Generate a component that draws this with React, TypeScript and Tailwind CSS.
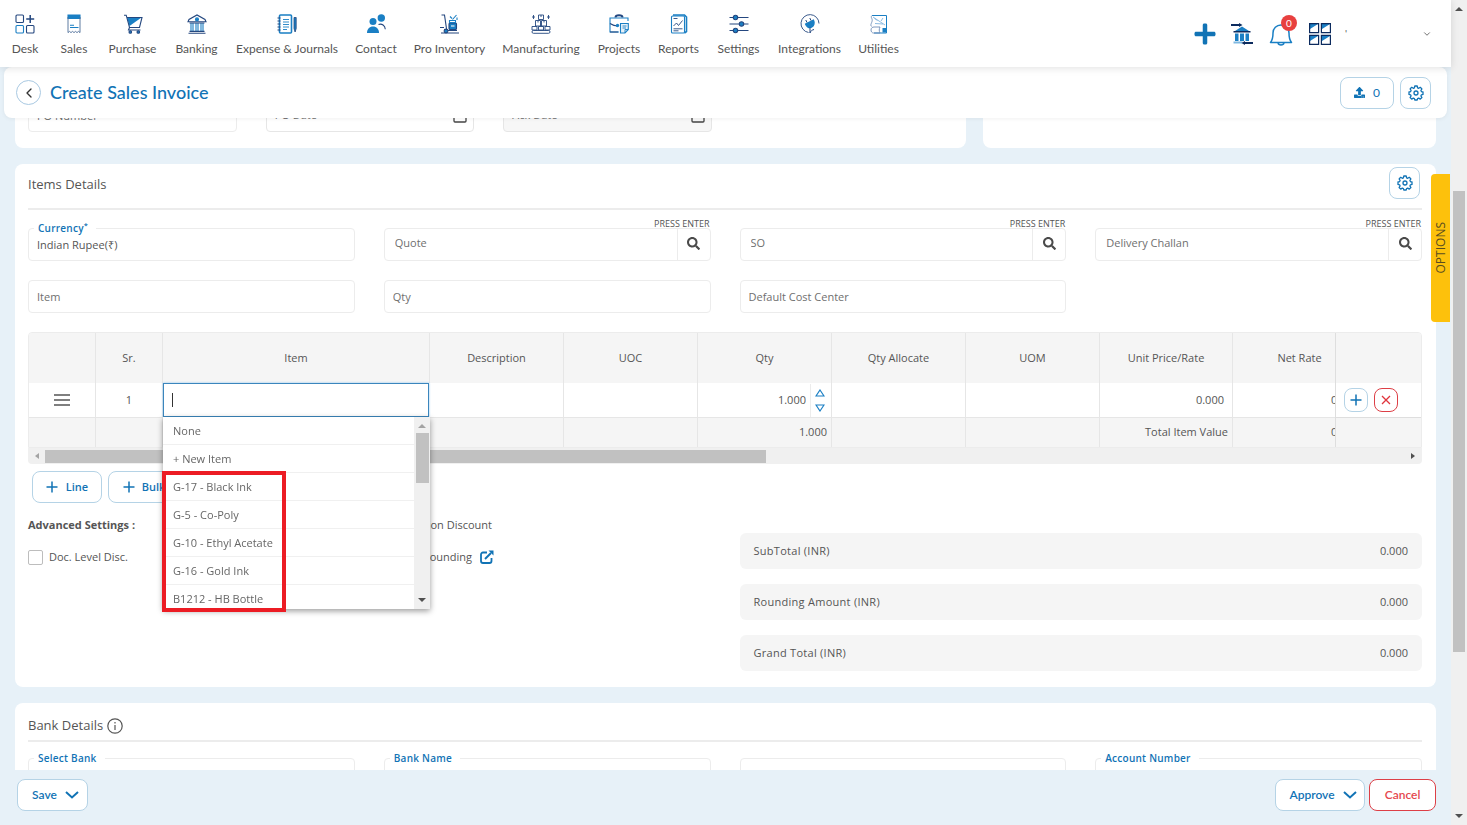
import React, { useState } from 'react';
import { FaPlus, FaUpload, FaSearch } from 'react-icons/fa';
import { FiChevronDown, FiChevronLeft } from 'react-icons/fi';

const BLUE = '#1a7fc4';
const NAVY = '#24477f';

// ---------- Icons ----------

interface NavIconProps {
  children: React.ReactNode;
}

const NavIcon: React.FC<NavIconProps> = ({ children }) => (
  <svg className="w-5 h-5" viewBox="0 0 20 20" fill="none" stroke={NAVY} strokeWidth={1.1} aria-hidden="true">
    {children}
  </svg>
);

const DeskIcon = () => (
  <NavIcon>
    <rect x="1" y="1" width="7.5" height="7.5" rx="1" />
    <rect x="1" y="11.5" width="7.5" height="7.5" rx="1" stroke={BLUE} />
    <rect x="11.5" y="11.5" width="7.5" height="7.5" rx="1" />
    <path d="M15.2 1v8M11.2 5h8" strokeWidth={1.5} />
  </NavIcon>
);

const SalesIcon = () => (
  <NavIcon>
    <path d="M4 1h12v3.5H4z" fill={BLUE} stroke={BLUE} />
    <path d="M4 3v15.6l1.5-1.2 1.5 1.2 1.5-1.2 1.5 1.2 1.5-1.2 1.5 1.2 1.5-1.2 1.5 1.2V3" stroke="#4d6d97" strokeWidth={0.9} />
    <path d="M6 11.3h4M6 13.5h8.500" stroke={BLUE} />
  </NavIcon>
);

const PurchaseIcon = () => (
  <NavIcon>
    <path d="M4 3.5h14.5L6.500 12z" fill={BLUE} stroke="none" />
    <path d="M1 1.2h2.2l3.3 12.3h10L19 3.5H4" />
    <path d="M6.5 13.5l-1 2.5h12" />
    <circle cx="7.3" cy="18" r="1.3" fill={BLUE} />
    <circle cx="15.3" cy="18" r="1.3" fill={BLUE} />
  </NavIcon>
);

const BankingIcon = () => (
  <NavIcon>
    <path d="M1 7.8L2 5.5 10 1l8 4.5 1 2.3z" />
    <circle cx="10" cy="5.4" r="1.5" fill={BLUE} stroke={BLUE} />
    <path d="M4 9v8M6 9v8M9 9v8M11 9v8M14 9v8M16 9v8" stroke={BLUE} />
    <path d="M2.5 17.4h15M1.5 19.2h17M2.5 9h15" />
  </NavIcon>
);

const ExpenseIcon = () => (
  <NavIcon>
    <rect x="2.5" y="1" width="12" height="18" rx="1" stroke={BLUE} strokeWidth={1.6} />
    <path d="M.5 4h3M.5 7h3M.5 10h3M.5 13h3M.5 16h3" />
    <path d="M6 5.5h6M6 8h6M6 10.5h6M6 13h6M6 15.5h4" stroke={BLUE} strokeWidth={0.9} />
    <path d="M17 3.5h2.2v11L18.1 18 17 14.5z" fill={BLUE} strokeWidth={0.8} />
  </NavIcon>
);

const ContactIcon = () => (
  <NavIcon>
    <circle cx="7" cy="7.5" r="3.5" fill={BLUE} stroke="none" />
    <path d="M1 19c0-4 2.5-6.5 6-6.5s6 2.5 6 6.5z" fill={BLUE} stroke="none" />
    <circle cx="15.3" cy="4" r="3.700" fill={BLUE} stroke="none" />
    <path d="M12.5 10.500c3.500-1.200 6.500 1 6.800 4.800" />
  </NavIcon>
);

const InventoryIcon = () => (
  <NavIcon>
    <path d="M1.500 1h3l2.200 15M0 13.500h4M1 19h18M8 16.500h9" />
    <circle cx="6" cy="17" r="1.900" fill={BLUE} />
    <rect x="9" y="9" width="7.500" height="6.500" rx="1" fill={BLUE} />
    <path d="M9.500 6.500h6v2h-6zM10 2.500l2 2M16.500 1L12.500 5.500M17 3.500v2.500" stroke={BLUE} />
    <path d="M11 12h3.500" stroke="#fff" />
  </NavIcon>
);

const ManufacturingIcon = () => (
  <NavIcon>
    <path d="M7.500 1h5v4.500h-5zM4.500 6.500h5V12h-5zM10.500 6.500h5V12h-5z" strokeWidth={0.9} />
    <path d="M1 12.500h5v3.500H1zM7.500 12.500h5v3.500h-5zM14 12.500h5v3.500h-5z" strokeWidth={0.9} />
    <path d="M2.500 1v4M1 3h3M17.500 1v4M16 3h3M10 1v2M7 6.500v2M13 6.500v2" strokeWidth={0.9} />
    <rect x="1" y="16.500" width="18" height="2.800" rx="1.400" strokeWidth={0.9} />
  </NavIcon>
);

const ProjectsIcon = () => (
  <NavIcon>
    <path d="M6.500 3.500c0-3 7-3 7 0" strokeWidth={2} />
    <path d="M10 18H1V4h18v3" stroke={BLUE} />
    <path d="M1 9.500c3 2 5 2.500 8 2.500M1 18h8" />
    <circle cx="8.500" cy="11.500" r="1.700" fill={BLUE} stroke="none" />
    <path d="M11.500 9.500h7.800v6L16 19h-4.500z" fill="#e7f1f8" stroke={BLUE} />
    <path d="M13.500 12h4M13.500 14h3.500M16 19v-3.500h3" stroke={BLUE} strokeWidth={0.9} />
  </NavIcon>
);

const ReportsIcon = () => (
  <NavIcon>
    <path d="M4 1h11.500l2 2v14.500l-2 1.500" stroke={BLUE} strokeWidth={1.600} />
    <rect x="2.500" y="2" width="13" height="17" rx="1" fill="#fff" stroke={BLUE} />
    <path d="M4.500 12l3-3 2 2.500 4-5M4.500 4.500h4M4.500 14.800h9M4.500 16.800h5" strokeWidth={0.9} />
  </NavIcon>
);

const SettingsIcon = () => (
  <NavIcon>
    <path d="M.5 3.500h19M.5 10h19M.5 16.500h19" />
    <circle cx="6.500" cy="3.500" r="2.200" fill={BLUE} />
    <circle cx="12.500" cy="10" r="2.200" fill={BLUE} />
    <circle cx="6.500" cy="16.500" r="2.200" fill={BLUE} />
  </NavIcon>
);

const IntegrationsIcon = () => (
  <NavIcon>
    <path d="M8.500 18.500A9 9 0 1 1 19 9.500" strokeWidth={0.9} />
    <path d="M5.500 10l8-4c1.500 3 .5 6-2 7.200S6.500 13 5.500 10z" fill={BLUE} stroke={BLUE} />
    <path d="M7 8.500L5.800 6M11 6.500L9.800 4M10 13.500v5.500M10 19c.5-2 2-3 4-3.500" strokeWidth={1} />
  </NavIcon>
);

const UtilitiesIcon = () => (
  <NavIcon>
    <path d="M3 1.500h14.500V19H5" stroke={BLUE} strokeWidth={1} />
    <path d="M3 1.500c-2 2 1 3 0 6s-2 4 0 5M2 16c0-2 1.500-3 3-3h6c-1 2-1 4 0 6H4.500C3 19 2 17.500 2 16z" stroke="#6f8db5" strokeWidth={0.900} />
    <path d="M5.500 4.500l3 2M14 4l-2 3M6 9.500l8 .5M4 3l12 8" stroke="#7fb2dc" strokeWidth={0.900} />
    <path d="M13.500 14h4.500v4.500h-4.500z" fill={BLUE} stroke="none" />
  </NavIcon>
);

const TransferIcon = () => (
  <svg className="w-[22px] h-[22px]" viewBox="0 0 22 22" fill="none" aria-hidden="true">
    <path d="M4 8l7-4.500L18 8z" fill={BLUE} />
    <path d="M2.500 8h17v1.500h-17z" fill="#0c2b5e" />
    <path d="M4 10.500h3.500V18H4zM9 10.500h4V18H9zM14.500 10.500H18V18h-3.500z" fill={BLUE} />
    <path d="M2.500 18.500h9v2h-9z" fill="#7fb8e0" />
    <path d="M0 1h8V0l3.500 2L8 4V3H0zM22 19h-8v-1l-3.500 2 3.500 2v-1h8z" fill="#0c2b5e" />
  </svg>
);

const BellIcon = () => (
  <svg className="w-6 h-6" viewBox="0 0 24 24" fill="none" stroke={BLUE} strokeWidth={1.500} aria-hidden="true">
    <path d="M1.500 20.500c2-2.500 2.500-5 2.500-9.500 0-4.500 3.500-8 8-8s8 3.500 8 8c0 4.500.5 7 2.500 9.500z" strokeLinejoin="round" />
    <path d="M9 21c.5 2.500 5.500 2.500 6 0" />
  </svg>
);

const AppsIcon = () => (
  <svg className="w-[22px] h-[22px]" viewBox="0 0 22 22" fill="none" stroke="#0c2b5e" strokeWidth={1.200} aria-hidden="true">
    <path d="M1 1h8L1 6zM13 1h8l-8 5zM1 13h8l-8 5zM13 13h8l-8 5z" fill={BLUE} stroke="none" />
    <path d="M.6.6h9v9h-9zM12.400.6h9v9h-9zM.6 12.400h9v9h-9zM12.400 12.400h9v9h-9z" />
  </svg>
);

const GearIcon = () => (
  <svg className="w-4 h-4" viewBox="0 0 16 16" fill="none" stroke="#1173b5" strokeWidth={1.300} strokeLinejoin="round" aria-hidden="true">
    <path d="M6.800 1h2.400l.4 1.800 1.100.5 1.600-1 1.600 1.600-1 1.600.5 1.100 1.600.4v2.400l-1.600.4-.5 1.100 1 1.600-1.600 1.600-1.600-1-1.100.5L9.200 15H6.800l-.4-1.400-1.100-.5-1.600 1-1.600-1.600 1-1.600-.5-1.100L1 9.400V7l1.600-.4.5-1.100-1-1.600 1.600-1.600 1.600 1 1.100-.5z" />
    <circle cx="8" cy="8" r="2" />
  </svg>
);

const ThinPlus = () => (
  <svg className="w-3 h-3" viewBox="0 0 12 12" stroke="#1173b5" strokeWidth={1.500} aria-hidden="true">
    <path d="M6 .5v11M.5 6h11" />
  </svg>
);

const BoldChevron = () => (
  <svg className="w-[14px] h-2" viewBox="0 0 14 8" fill="none" stroke="#1173b5" strokeWidth={2} aria-hidden="true">
    <path d="M1 1l6 5.500L13 1" />
  </svg>
);

const ExternalIcon = () => (
  <svg className="w-[14px] h-[14px]" viewBox="0 0 14 14" fill="none" stroke="#1173b5" strokeWidth={1.800} aria-hidden="true">
    <path d="M7 2.500H3a2 2 0 0 0-2 2V11a2 2 0 0 0 2 2h6.500a2 2 0 0 0 2-2V8" />
    <path d="M5 9l6-6" strokeWidth={2} />
    <path d="M8.500.5h5v5z" fill="#1173b5" stroke="none" />
  </svg>
);

// ---------- Data ----------

const navItems = [
  { label: 'Desk', width: 'w-7', icon: <DeskIcon /> },
  { label: 'Sales', width: 'w-[34px]', icon: <SalesIcon /> },
  { label: 'Purchase', width: 'w-[47px]', icon: <PurchaseIcon /> },
  { label: 'Banking', width: 'w-[45px]', icon: <BankingIcon /> },
  { label: 'Expense & Journals', width: 'w-[100px]', icon: <ExpenseIcon /> },
  { label: 'Contact', width: 'w-[42px]', icon: <ContactIcon /> },
  { label: 'Pro Inventory', width: 'w-[69px]', icon: <InventoryIcon /> },
  { label: 'Manufacturing', width: 'w-[78px]', icon: <ManufacturingIcon /> },
  { label: 'Projects', width: 'w-[42px]', icon: <ProjectsIcon /> },
  { label: 'Reports', width: 'w-[41px]', icon: <ReportsIcon /> },
  { label: 'Settings', width: 'w-[43px]', icon: <SettingsIcon /> },
  { label: 'Integrations', width: 'w-[63px]', icon: <IntegrationsIcon /> },
  { label: 'Utilities', width: 'w-[39px]', icon: <UtilitiesIcon /> },
];

const itemOptions = [
  'None',
  '+ New Item',
  'G-17 - Black Ink',
  'G-5 - Co-Poly',
  'G-10 - Ethyl Acetate',
  'G-16 - Gold Ink',
  'B1212 - HB Bottle',
];

const columns = [
  { title: '', width: 'w-[67px]' },
  { title: 'Sr.', width: 'w-[67px]' },
  { title: 'Item', width: 'w-[267px]' },
  { title: 'Description', width: 'w-[134px]' },
  { title: 'UOC', width: 'w-[134px]' },
  { title: 'Qty', width: 'w-[134px]' },
  { title: 'Qty Allocate', width: 'w-[134px]' },
  { title: 'UOM', width: 'w-[134px]' },
  { title: 'Unit Price/Rate', width: 'w-[133px]' },
  { title: 'Net Rate', width: 'w-[134px]' },
];

const totals = ['SubTotal (INR)', 'Rounding Amount (INR)', 'Grand Total (INR)'];

// ---------- Form fields ----------

const inputClass = 'w-full h-[33px] px-2 border border-[#ececec] rounded bg-white outline-none text-[#555] placeholder:text-[#6f6f6f]';

const PlainField: React.FC<{ label: string }> = ({ label }) => (
  <input type="text" aria-label={label} placeholder={label} className={inputClass} />
);

const SearchField: React.FC<{ label: string }> = ({ label }) => (
  <div className="relative flex h-[33px] border border-[#ececec] rounded">
    <span className="absolute right-0 -top-[13px] text-[9px] leading-4 text-[#555]">PRESS ENTER</span>
    <input
      type="text"
      aria-label={label}
      placeholder={label}
      className="flex-1 min-w-0 px-[10px] pb-0.5 outline-none placeholder:text-[#6f6f6f]"
    />
    <button type="button" aria-label={`Search ${label}`} className="w-[33px] pb-0.5 border-l border-[#ececec] flex items-center justify-center">
      <FaSearch className="w-[13px] h-[13px] text-[#4a4a4a]" />
    </button>
  </div>
);

const FloatingField: React.FC<{ id: string; label: string; required?: boolean; value?: string }> = ({ id, label, required, value }) => (
  <div className="relative">
    {label && (
      <label htmlFor={id} className="absolute left-1.5 -top-2 px-1 pr-2 bg-white text-[10px] leading-4 font-semibold tracking-wide text-[#1173b5]">
        {label}
        {required && <sup>*</sup>}
      </label>
    )}
    <input id={id} type="text" aria-label={label || 'Branch'} defaultValue={value} className={inputClass} />
  </div>
);

const DateField: React.FC<{ label: string; disabled?: boolean }> = ({ label, disabled }) => (
  <div className={`flex items-center h-[33px] border border-[#e6e6e6] rounded ${disabled ? 'bg-[#f7f7f7]' : 'bg-white'}`}>
    <input type="text" aria-label={label} placeholder={label} disabled={disabled} className="flex-1 min-w-0 px-2 outline-none placeholder:text-[#6f6f6f]" />
    <svg className="w-[14px] h-[14px] mr-1.5" viewBox="0 0 14 14" fill="none" stroke="#444" strokeWidth={1.300} aria-hidden="true">
      <rect x="1" y="1" width="12" height="12" rx="1" />
    </svg>
  </div>
);

// ---------- Sections ----------

const TopNav = () => (
  <header className="relative z-30 h-[67px] shrink-0 bg-white flex items-center justify-between shadow-[0_1px_8px_rgba(0,0,0,0.12)] font-['Lato',sans-serif]">
    <nav className="flex gap-[18px] pl-[11px]">
      {navItems.map(item => (
        <a key={item.label} href="#" className={`${item.width} flex flex-col items-center gap-[7px] pt-1 text-xs leading-4 text-[#555] whitespace-nowrap`}>
          {item.icon}
          {item.label}
        </a>
      ))}
    </nav>
    <div className="flex items-center pr-[19px]">
      <button type="button" aria-label="Add" className="mr-[14px]">
        <FaPlus className="w-6 h-6 text-[#1173b5]" />
      </button>
      <button type="button" aria-label="Bank transfer" className="mr-4">
        <TransferIcon />
      </button>
      <button type="button" aria-label="Notifications" className="relative mr-4">
        <BellIcon />
        <span className="absolute -right-1 -top-[7px] w-4 h-4 rounded-full bg-[#e8403f] text-white text-[10px] leading-4 text-center">0</span>
      </button>
      <button type="button" aria-label="Apps" className="mr-[14px]">
        <AppsIcon />
      </button>
      <button type="button" aria-label="Account" className="w-[87px] flex items-center justify-between text-[10px] text-[#555]">
        <span>'</span>
        <FiChevronDown className="w-[10px] h-[10px]" />
      </button>
    </div>
  </header>
);

const TitleBar = () => (
  <div className="relative z-20 h-[51px] shrink-0 mx-1 pl-3 pr-4 bg-white rounded-lg flex items-center justify-between shadow-[0_1px_4px_rgba(0,0,0,0.06)] font-['Lato',sans-serif]">
    <div className="flex items-center gap-[9px]">
      <button type="button" aria-label="Back" className="w-[25px] h-[25px] rounded-full border border-[#a9c9e2] flex items-center justify-center">
        <FiChevronLeft className="w-4 h-4 text-[#333]" />
      </button>
      <h1 className="pb-0.5 text-lg font-medium text-[#1173b5]">Create Sales Invoice</h1>
    </div>
    <div className="flex gap-1.5">
      <button type="button" className="w-[54px] h-8 rounded-lg border border-[#b5d3e6] flex items-center justify-center gap-2 text-xs text-[#1173b5]">
        <FaUpload className="w-[11px] h-[11px]" />
        0
      </button>
      <button type="button" aria-label="Page settings" className="w-[31px] h-8 rounded-lg border border-[#b5d3e6] flex items-center justify-center">
        <GearIcon />
      </button>
    </div>
  </div>
);

const cell = 'border-r border-[#e6e6e6]';

const ItemsTable = () => {
  const [search, setSearch] = useState('');

  return (
    <div className="relative mt-[19px]">
      <div className="border border-[#ececec] rounded-t overflow-x-hidden">
        <table className="w-full min-w-[1424px] table-fixed border-separate border-spacing-0 text-[#555]">
          <thead>
            <tr className="h-[50px] bg-[#f5f5f5]">
              {columns.map((col, i) => (
                <th key={i} scope="col" className={`${cell} ${col.width} p-0 font-medium`}>{col.title}</th>
              ))}
              <th scope="col" aria-label="Actions" className="sticky right-0 z-10 w-[86px] bg-[#f5f5f5] border-l border-[#dedede]" />
            </tr>
          </thead>
          <tbody>
            <tr className="h-[34px]">
              <td className={`${cell} p-0`}>
                <svg className="w-4 h-3 mx-auto" viewBox="0 0 16 12" stroke="#555" strokeWidth={1.500} aria-hidden="true">
                  <path d="M0 1h16M0 6h16M0 11h16" />
                </svg>
              </td>
              <td className={`${cell} p-0 text-center font-medium`}>1</td>
              <td className="p-0 pr-px">
                <div className="h-[34px] flex items-center pl-2 border border-[#3b86bd] shadow-[0_0_2px_#8cc4ee]">
                  <span className="w-px h-[14px] bg-[#333]" />
                  <input
                    type="text"
                    aria-label="Item"
                    value={search}
                    onChange={e => setSearch(e.target.value)}
                    className="flex-1 min-w-0 outline-none"
                  />
                </div>
              </td>
              <td className={cell} />
              <td className={cell} />
              <td className={`${cell} p-0`}>
                <div className="flex items-center justify-end h-[33px]">
                  <input type="text" aria-label="Qty" defaultValue="1.000" className="w-20 pr-1 text-right outline-none" />
                  <div className="w-[21px] h-full border-l border-[#ececec] flex flex-col items-center justify-between py-[5px] pr-0.5">
                    <button type="button" aria-label="Increase" className="leading-none">
                      <svg className="w-[10px] h-2" viewBox="0 0 10 8" fill="none" stroke="#1a7fc4" strokeWidth={1.200}>
                        <path d="M5 1l4 6H1z" />
                      </svg>
                    </button>
                    <button type="button" aria-label="Decrease" className="leading-none">
                      <svg className="w-[10px] h-2" viewBox="0 0 10 8" fill="none" stroke="#1a7fc4" strokeWidth={1.200}>
                        <path d="M5 7l4-6H1z" />
                      </svg>
                    </button>
                  </div>
                </div>
              </td>
              <td className={cell} />
              <td className={cell} />
              <td className={`${cell} py-0 pl-0 pr-2 text-right`}>0.000</td>
              <td className="py-0 pl-0 pr-2 text-right">0.000</td>
              <td className="sticky right-0 z-10 p-0 bg-white border-l border-[#dedede]">
                <div className="flex gap-1.5 pl-2">
                  <button type="button" aria-label="Add row" className="w-6 h-6 rounded-lg border border-[#b5d3e6] flex items-center justify-center">
                    <ThinPlus />
                  </button>
                  <button type="button" aria-label="Remove row" className="w-6 h-6 rounded-lg border border-[#dd3f46] flex items-center justify-center">
                    <svg className="w-[10px] h-[10px]" viewBox="0 0 10 10" stroke="#e0343c" strokeWidth={1.300} aria-hidden="true">
                      <path d="M1 1l8 8M9 1l-8 8" />
                    </svg>
                  </button>
                </div>
              </td>
            </tr>
            <tr className="h-[30px] bg-[#f5f5f5] font-medium">
              <td className={`${cell} border-t`} />
              <td className={`${cell} border-t`} />
              <td className={`${cell} border-t`} />
              <td className={`${cell} border-t`} />
              <td className={`${cell} border-t`} />
              <td className={`${cell} border-t py-0 pl-0 pr-1 text-right`}>1.000</td>
              <td className={`${cell} border-t`} />
              <td className={`${cell} border-t`} />
              <td className={`${cell} border-t py-0 pl-0 pr-1 text-right whitespace-nowrap`}>Total Item Value</td>
              <td className="border-t border-[#e6e6e6] py-0 pl-0 pr-2 text-right">0.000</td>
              <td className="sticky right-0 z-10 bg-[#f5f5f5] border-l border-t border-[#dedede]" />
            </tr>
          </tbody>
        </table>
      </div>

      {/* Horizontal scrollbar */}
      <div className="h-4 flex items-center bg-[#f0f0f0] rounded-b px-[7px]">
        <span className="border-y-[3px] border-y-transparent border-r-4 border-r-[#a3a3a3]" />
        <div className="flex-1 mx-[6px]">
          <div className="w-[53%] h-[13px] bg-[#c1c1c1]" />
        </div>
        <span className="border-y-[3px] border-y-transparent border-l-4 border-l-[#505050]" />
      </div>

      {/* Item suggestions */}
      <div className="absolute z-20 left-[135px] top-[85px] w-[267px]">
        <div className="flex h-48 bg-white shadow-[0_2px_6px_rgba(0,0,0,0.4)]">
          <ul className="flex-1 overflow-hidden">
            {itemOptions.map(option => (
              <li key={option} className="h-7 px-[10px] border-b border-[#f0f0f0] leading-7 text-[#666] cursor-pointer">
                {option}
              </li>
            ))}
          </ul>
          <div className="w-4 bg-[#f0f0f0] flex flex-col items-center justify-between py-[7px]">
            <div className="flex flex-col items-center gap-[5px]">
              <span className="border-x-4 border-x-transparent border-b-4 border-b-[#a3a3a3]" />
              <span className="w-[13px] h-[50px] bg-[#c1c1c1]" />
            </div>
            <span className="border-x-4 border-x-transparent border-t-4 border-t-[#505050]" />
          </div>
        </div>
        <div className="absolute -left-px top-[54px] w-[124px] h-[141px] border-4 border-[#ec1c24] pointer-events-none" />
      </div>
    </div>
  );
};

const ItemsDetails = () => (
  <section className="bg-white rounded-lg pl-[13px] pr-[14px] pb-4">
    <div className="h-[46px] flex items-center justify-between pb-1.5 pr-0.5 border-b-2 border-[#ececec]">
      <h2 className="pt-1 text-[13px] font-medium text-[#555]">Items Details</h2>
      <button type="button" aria-label="Items settings" className="w-[31px] h-8 rounded-lg border border-[#b5d3e6] flex items-center justify-center">
        <GearIcon />
      </button>
    </div>

    <div className="grid grid-cols-4 gap-x-[29px] gap-y-[19px] mt-[18px]">
      <FloatingField id="currency" label="Currency" required value="Indian Rupee(₹)" />
      <SearchField label="Quote" />
      <SearchField label="SO" />
      <SearchField label="Delivery Challan" />
      <PlainField label="Item" />
      <PlainField label="Qty" />
      <PlainField label="Default Cost Center" />
    </div>

    <ItemsTable />

    <div className="grid grid-cols-2 gap-x-[29px] mt-[7px]">
      <div>
        <div className="flex gap-1.5 pl-1">
          <button type="button" className="w-[70px] h-8 rounded-lg border border-[#b5d3e6] flex items-center justify-center gap-2 font-semibold text-[#1173b5]">
            <ThinPlus />
            Line
          </button>
          <button type="button" className="w-[72px] h-8 rounded-lg border border-[#b5d3e6] flex items-center justify-center gap-[7px] font-semibold text-[#1173b5]">
            <ThinPlus />
            Bulk
          </button>
        </div>
        <div className="w-[464px] flex justify-between mt-[14px] leading-4">
          <span className="font-bold">Advanced Settings :</span>
          <span>Transaction Discount</span>
        </div>
        <div className="w-[466px] flex items-center justify-between mt-4 leading-4">
          <label className="flex items-center gap-1.5">
            <input type="checkbox" className="appearance-none w-[15px] h-[15px] border border-[#bdbdbd] rounded-xs" />
            Doc. Level Disc.
          </label>
          <div className="flex items-center gap-2">
            Rounding
            <a href="#" aria-label="Open rounding">
              <ExternalIcon />
            </a>
          </div>
        </div>
      </div>

      <div className="flex flex-col gap-[15px] mt-[62px]">
        {totals.map(label => (
          <div key={label} className="h-9 px-[14px] flex items-center justify-between bg-[#f5f5f5] rounded-md font-medium text-[#555]">
            <span className="tracking-wide">{label}</span>
            <span>0.000</span>
          </div>
        ))}
      </div>
    </div>
  </section>
);

const BankDetails = () => (
  <section className="bg-white rounded-lg pl-[13px] pr-[14px] pb-6">
    <div className="h-[39px] flex items-center gap-1 pt-2 border-b-2 border-[#ececec]">
      <h2 className="text-[13px] font-medium text-[#555]">Bank Details</h2>
      <svg className="w-4 h-4" viewBox="0 0 16 16" fill="none" stroke="#555" aria-hidden="true">
        <circle cx="8" cy="8" r="7.200" strokeWidth={1.200} />
        <path d="M8 7v5M8 4v1.500" strokeWidth={1.200} />
      </svg>
    </div>
    <div className="grid grid-cols-4 gap-x-[29px] mt-4">
      <FloatingField id="bank" label="Select Bank" />
      <FloatingField id="bank-name" label="Bank Name" />
      <FloatingField id="branch" label="" />
      <FloatingField id="account-number" label="Account Number" />
    </div>
  </section>
);

const FooterBar = () => (
  <footer className="relative z-20 h-[55px] shrink-0 bg-[#e7f1f8] pl-[17px] pr-[15px] flex items-start justify-between pt-[9px] text-xs font-['Lato',sans-serif]">
    <button type="button" className="h-8 w-[71px] rounded-lg border border-[#b5d3e6] bg-white flex items-center justify-center gap-2 pl-1.5 font-semibold text-[#1173b5]">
      Save
      <BoldChevron />
    </button>
    <div className="flex gap-1">
      <button type="button" className="h-8 w-[90px] rounded-lg border border-[#b5d3e6] bg-white flex items-center justify-center gap-2 pl-1.5 font-semibold text-[#1173b5]">
        Approve
        <BoldChevron />
      </button>
      <button type="button" className="h-8 w-[67px] rounded-lg border border-[#dd3f46] bg-white font-semibold text-[#e5474d]">
        Cancel
      </button>
    </div>
  </footer>
);

const App: React.FC = () => {
  return (
    <div className="h-screen flex bg-[#e7f1f8] text-[11px] text-[#555] font-['Open_Sans','Noto_Sans',sans-serif]">
      <div className="relative flex-1 min-w-0 flex flex-col">
        <TopNav />
        <TitleBar />
        <main className="flex-1 min-h-0 overflow-hidden px-[15px]">
          <div className="-mt-[19px] grid grid-cols-[951fr_453fr] gap-[17px]">
            <div className="bg-white rounded-lg px-[13px] pb-4">
              <div className="w-[684px] grid grid-cols-3 gap-[29px]">
                <PlainField label="PO Number" />
                <DateField label="PO Date" />
                <DateField label="Ack Date" disabled />
              </div>
            </div>
            <div className="bg-white rounded-lg" />
          </div>
          <div className="mt-4 flex flex-col gap-4">
            <ItemsDetails />
            <BankDetails />
          </div>
        </main>
        <FooterBar />

        <button
          type="button"
          className="absolute z-10 right-px top-[174px] w-[19px] h-[148px] rounded-l bg-[#fdc10c] flex items-center justify-center text-xs text-[#5a4c20]"
        >
          <span className="[writing-mode:vertical-rl] rotate-180">OPTIONS</span>
        </button>
      </div>

      {/* Page scrollbar */}
      <div className="w-4 shrink-0 bg-[#f0f0f0] flex flex-col items-center py-[7px]">
        <span className="border-x-4 border-x-transparent border-b-4 border-b-[#505050]" />
        <div className="flex-1 w-full pt-[180px] px-0.5">
          <div className="h-[74%] bg-[#c1c1c1]" />
        </div>
        <span className="border-x-4 border-x-transparent border-t-4 border-t-[#505050]" />
      </div>
    </div>
  );
};

export default App;
